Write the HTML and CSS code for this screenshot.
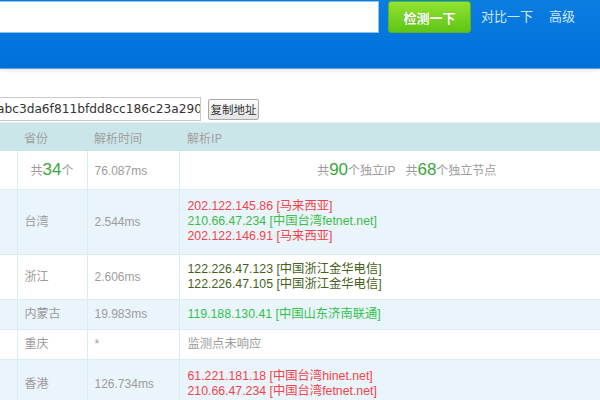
FILE: index.html
```html
<!DOCTYPE html>
<html lang="zh-CN">
<head>
<meta charset="utf-8">
<link rel="stylesheet" href="styles.css">
</head>
<body>
<header class="top">
  <div class="search"></div>
  <button class="go">检测一下</button>
  <a class="link">对比一下</a>
  <a class="link">高级</a>
</header>
<div class="addr">
  <div class="addr-box">abc3da6f811bfdd8cc186c23a2904</div>
  <button class="copy">复制地址</button>
</div>
<table class="res">
  <thead>
    <tr><th class="c1"></th><th class="c2">省份</th><th class="c3">解析时间</th><th class="c4">解析IP</th></tr>
  </thead>
  <tbody>
    <tr class="sum">
      <td class="c1"></td>
      <td class="c2 ctr">共<b>34</b>个</td>
      <td class="c3">76.087ms</td>
      <td class="c4 ctr">共<b>90</b>个独立IP&nbsp;&nbsp;&nbsp;共<b>68</b>个独立节点</td>
    </tr>
    <tr class="alt">
      <td class="c1"></td>
      <td class="c2">台湾</td>
      <td class="c3">2.544ms</td>
      <td class="c4 tall">
        <div class="red">202.122.145.86 [马来西亚]</div>
        <div class="grn">210.66.47.234 [中国台湾fetnet.net]</div>
        <div class="red">202.122.146.91 [马来西亚]</div>
      </td>
    </tr>
    <tr>
      <td class="c1"></td>
      <td class="c2">浙江</td>
      <td class="c3">2.606ms</td>
      <td class="c4">
        <div class="olv">122.226.47.123 [中国浙江金华电信]</div>
        <div class="olv">122.226.47.105 [中国浙江金华电信]</div>
      </td>
    </tr>
    <tr class="alt">
      <td class="c1"></td>
      <td class="c2">内蒙古</td>
      <td class="c3">19.983ms</td>
      <td class="c4"><div class="lgr">119.188.130.41 [中国山东济南联通]</div></td>
    </tr>
    <tr>
      <td class="c1"></td>
      <td class="c2">重庆</td>
      <td class="c3">*</td>
      <td class="c4">监测点未响应</td>
    </tr>
    <tr class="alt last">
      <td class="c1"></td>
      <td class="c2">香港</td>
      <td class="c3">126.734ms</td>
      <td class="c4">
        <div class="red">61.221.181.18 [中国台湾hinet.net]</div>
        <div class="red">210.66.47.234 [中国台湾fetnet.net]</div>
      </td>
    </tr>
  </tbody>
</table>
</body>
</html>
```

FILE: styles.css
```css
html, body {
  margin: 0;
  padding: 0;
  background: #fff;
  overflow: hidden;
  width: 600px;
  height: 400px;
}
body {
  font-family: "Liberation Sans", "Noto Sans CJK SC", sans-serif;
  font-size: 12px;
  color: #9c9c9c;
}
.top {
  height: 68px;
  border-bottom: 1px solid #5aa3e8;
  background: linear-gradient(#0b7de1, #0070d9);
  display: flex;
  align-items: flex-start;
  box-shadow: 0 3px 4px -2px rgba(0, 0, 0, 0.12);
}
.search {
  width: 378px;
  height: 30px;
  margin-top: 1px;
  background: #fff;
  border: 1px solid #8fc1ef;
  border-left: none;
}
.go {
  margin: 1px 0 0 9px;
  width: 83px;
  height: 32px;
  border: 1px solid #58b51a;
  border-radius: 3px;
  background: linear-gradient(#92e330, #5ec516);
  color: #fff;
  font-family: "Noto Sans CJK SC", sans-serif;
  font-size: 13px;
  font-weight: bold;
  padding: 0;
  text-shadow: 0 0 1px rgba(0, 0, 0, 0.25);
}
.link {
  margin: 7px 0 0 10px;
  line-height: 18px;
  color: #d2e7fc;
  font-family: "Noto Sans CJK SC", sans-serif;
  font-size: 13px;
}
.link + .link {
  margin-left: 16px;
}
.addr {
  display: flex;
  align-items: center;
  padding-top: 28px;
  height: 24px;
}
.addr-box {
  width: 200px;
  height: 22px;
  line-height: 22px;
  border: 1px solid #c9c9c9;
  border-left: none;
  overflow: hidden;
  white-space: nowrap;
  text-indent: -3px;
  color: #333;
  font-family: "DejaVu Sans", sans-serif;
  font-size: 12.2px;
}
.copy {
  margin-left: 7px;
  height: 21px;
  width: 51px;
  padding: 0;
  border: 1px solid #a9a9a9;
  border-radius: 2px;
  background: linear-gradient(#fbfbfb, #e4e4e4);
  color: #333;
  font-family: "Noto Sans CJK SC", sans-serif;
  font-size: 11.5px;
}
.res {
  margin-top: 1px;
  width: 634px;
  border-collapse: collapse;
  table-layout: fixed;
}
.res th {
  height: 28px;
  background: #cbe6e9;
  font-weight: normal;
  text-align: left;
  padding: 0 7px;
  color: #a0a0a0;
  font-family: "Noto Sans CJK SC", sans-serif;
  border-top: 1px solid #e2eff1;
}
.res td {
  padding: 7px 7px;
  line-height: 15px;
  border: 1px solid #d9ecef;
  border-top: none;
  vertical-align: middle;
}
.res td:first-child, .res th:first-child {
  border-left: none;
}
.c1 { width: 3px; }
.c2 { width: 56px; }
.c3 { width: 78px; }
.res td.c4 {
  font-size: 12.3px;
  padding-left: 8px;
}
.res th.c4 { padding-left: 8px; }
.ctr { text-align: center; }
.sum td {
  padding-top: 11px;
  padding-bottom: 10px;
  line-height: 16px;
}
.res .sum td.c4 { font-size: 12px; }
.sum b {
  font-weight: normal;
  color: #3aa63a;
  font-size: 17px;
}
.alt td { background: #eaf4fb; }
.res td.tall {
  padding-top: 9px;
  padding-bottom: 10px;
}
.res .last td {
  padding-top: 9px;
  padding-bottom: 30px;
}
.red { color: #f4424a; }
.grn { color: #3fbb48; }
.olv { color: #46621a; }
.lgr { color: #33c24c; }
```
